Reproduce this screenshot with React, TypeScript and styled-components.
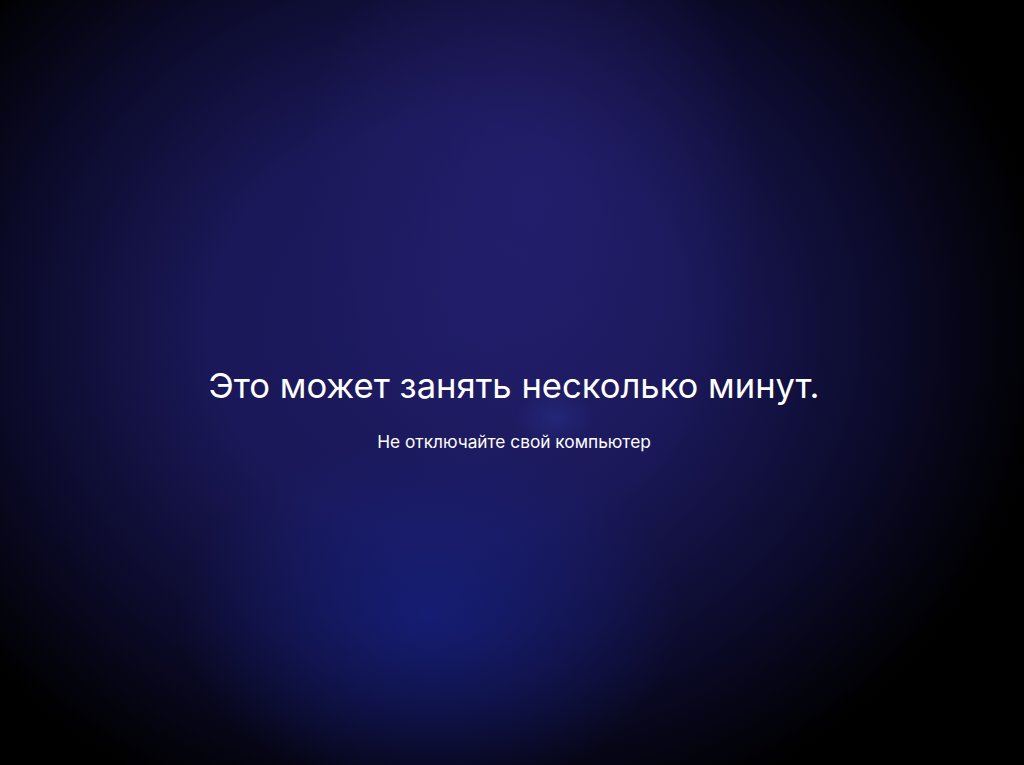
import React from "react";
import styled, { createGlobalStyle } from "styled-components";

const Global = createGlobalStyle`
  html, body { margin: 0; padding: 0; background: #000; }
  #root { width: 1024px; height: 765px; }
`;

const Screen = styled.div`
  width: 1024px;
  height: 765px;
  overflow: hidden;
  display: flex;
  flex-direction: column;
  align-items: center;
  justify-content: center;
  font-family: "Inter", "Noto Sans", sans-serif;
  color: #ffffff;
  background:
    radial-gradient(ellipse 40px 30px at 555px 418px, rgba(45, 60, 160, 0.35) 0%, rgba(45, 60, 160, 0) 100%),
    radial-gradient(ellipse 250px 180px at 430px 615px, rgba(22, 34, 135, 0.7) 0%, rgba(22, 34, 135, 0) 100%),
    radial-gradient(ellipse 230px 330px at 530px 200px, rgba(42, 34, 120, 0.55) 0%, rgba(42, 34, 120, 0) 100%),
    radial-gradient(ellipse 600px 520px at 450px 330px, #1d1b62 0%, #1a1858 40%, #0c0b2c 72%, #000000 100%);
`;

const Content = styled.div`
  display: flex;
  flex-direction: column;
  align-items: center;
  gap: 26px;
  margin-top: 52px;
  margin-left: 4px;
`;

const Title = styled.h1`
  margin: 0;
  font-weight: 400;
  font-size: 34.6px;
  line-height: 40px;
  letter-spacing: 0;
`;

const Subtitle = styled.p`
  margin: 0;
  font-weight: 400;
  font-size: 17.3px;
  line-height: 22px;
`;

export default function App() {
  return (
    <>
      <Global />
      <Screen>
        <Content>
          <Title>Это может занять несколько минут.</Title>
          <Subtitle>Не отключайте свой компьютер</Subtitle>
        </Content>
      </Screen>
    </>
  );
}
